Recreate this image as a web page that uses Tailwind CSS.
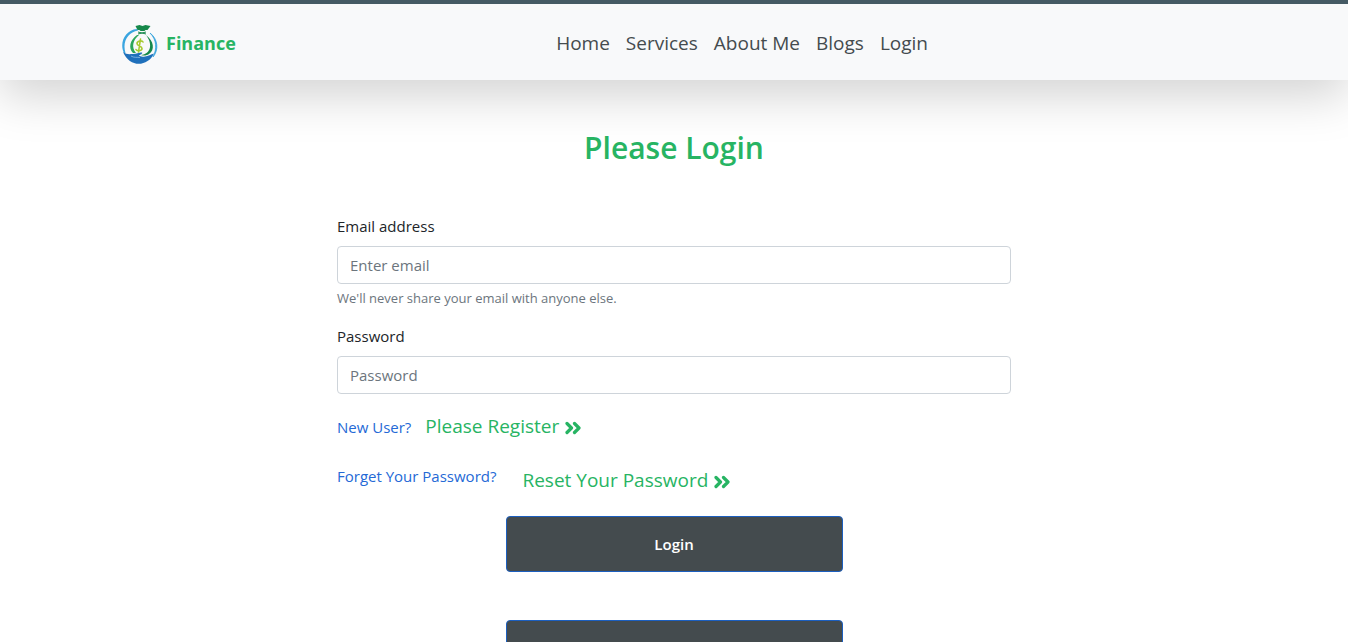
<!DOCTYPE html>
<html lang="en">
<head>
<meta charset="utf-8">
<meta name="viewport" content="width=device-width, initial-scale=1">
<title>Finance</title>
<script src="https://cdn.jsdelivr.net/npm/@tailwindcss/browser@4"></script>
</head>
<body class="bg-white font-['Open_Sans','Noto_Sans',sans-serif] text-[15px] leading-6 text-[#212529]">
<header class="border-t-4 border-[#455a64] bg-[#f8f9fa] shadow-[0_16px_48px_rgba(0,0,0,0.175)]">
  <nav class="mx-auto flex h-19 max-w-[1140px] items-center px-4 pt-0.5">
    <a href="#" class="flex flex-1 items-center gap-2 text-lg font-bold text-[#27b463]">
      <svg class="mt-1 h-10 w-[38px]" viewBox="3 4 38 40" fill="none" aria-hidden="true">
        <path d="M7 32C2 22 8 9 20 8l1 1.500C11 11 5 21 8.500 32z" fill="#3aa5e0"/>
        <path d="M33 12c8 6 9 17 3 24 4-8 4-17-3-24z" fill="#3aa5dc" stroke="#3aa5dc" stroke-width=".8"/>
        <path d="M6 31c4 3 7 2 10 2 4 0 6-2 9-1.500 1 1-1 2-3 3 1 1 3 1.500 6 1 3-.5 6-2 9-3-6 13-24 15-31-1.500z" fill="#1f70bb"/>
        <path d="M14 35c3 2 6 1 9 1.500" stroke="#8bbce4" stroke-width=".8"/>
        <path d="m18.500 5 4-1 3 1 3-1 5 1-3 4h-2l-1 1h-4l-1-1h-2z" fill="#16884a"/>
        <path d="m21 11 8 2m-8 0 8-2" stroke="#16884a" stroke-width="1"/>
        <path d="M20 14c-7 5-9 13-4 18h3c-5-6-3-13 3-18z" fill="#2ba65a"/>
        <path d="M29 14c8 6 9 15 3 19-2 1.500-5 2-8 1 10-1 12-11 5-20z" fill="#16884a"/>
        <path d="M26 21c-1-2-6-1-6 1.500 0 3 5 2 5 5 0 2.500-5 3-6 1M23.500 18 21.500 31" stroke="#a5c92d" stroke-width="1.600" stroke-linecap="round"/>
      </svg>
      Finance
    </a>
    <ul class="flex gap-4 text-[19px] text-[#444b4e]">
      <li><a href="#">Home</a></li>
      <li><a href="#">Services</a></li>
      <li><a href="#">About Me</a></li>
      <li><a href="#">Blogs</a></li>
      <li><a href="#">Login</a></li>
    </ul>
    <div class="w-[300px]"></div>
  </nav>
</header>
<main class="mx-auto w-1/2 pt-12 pb-12">
  <h1 class="text-center text-[30px] leading-10 font-semibold text-[#27b463]">Please Login</h1>
  <form class="mt-[46px]">
    <label for="email" class="mb-2 block">Email address</label>
    <input id="email" type="email" placeholder="Enter email" aria-describedby="email-help" class="block h-[38px] w-full rounded border border-[#ced4da] bg-white px-3 placeholder:text-[#6c757d]">
    <small id="email-help" class="mt-1 block text-[13px] leading-5 text-[#6c757d]">We'll never share your email with anyone else.</small>
    <label for="password" class="mt-4 mb-2 block">Password</label>
    <input id="password" type="password" placeholder="Password" class="block h-[38px] w-full rounded border border-[#ced4da] bg-white px-3 placeholder:text-[#6c757d]">
    <div class="mt-4 flex items-baseline gap-3.5">
      <a href="#" class="text-[#2469d6]">New User?</a>
      <a href="#" class="flex items-center gap-1.5 text-[19px] leading-8 text-[#27b463]">Please Register
        <svg class="mt-1 h-3.5 w-4" viewBox="0 0 16 14" fill="none" stroke="currentColor" stroke-width="3.200" stroke-linecap="round" stroke-linejoin="round" aria-hidden="true"><path d="M2 2.500 6.500 7 2 11.500M9.500 2.500 14 7l-4.500 4.500"/></svg>
      </a>
    </div>
    <div class="mt-[22px] flex items-start gap-[26px]">
      <a href="#" class="text-[#2469d6]">Forget Your Password?</a>
      <a href="#" class="flex items-center gap-1.5 text-[19px] leading-8 text-[#27b463]">Reset Your Password
        <svg class="mt-1 h-3.5 w-4" viewBox="0 0 16 14" fill="none" stroke="currentColor" stroke-width="3.200" stroke-linecap="round" stroke-linejoin="round" aria-hidden="true"><path d="M2 2.500 6.500 7 2 11.500M9.500 2.500 14 7l-4.500 4.500"/></svg>
      </a>
    </div>
    <button type="submit" class="mx-auto mt-5 block h-14 w-1/2 rounded border border-[#1c5fbf] bg-[#444b4e] font-semibold text-white">Login</button>
  </form>
  <button type="button" aria-label="More sign-in options" class="mx-auto mt-12 block h-14 w-1/2 rounded border border-[#1c5fbf] bg-[#444b4e] font-semibold text-white"></button>
</main>
</body>
</html>
